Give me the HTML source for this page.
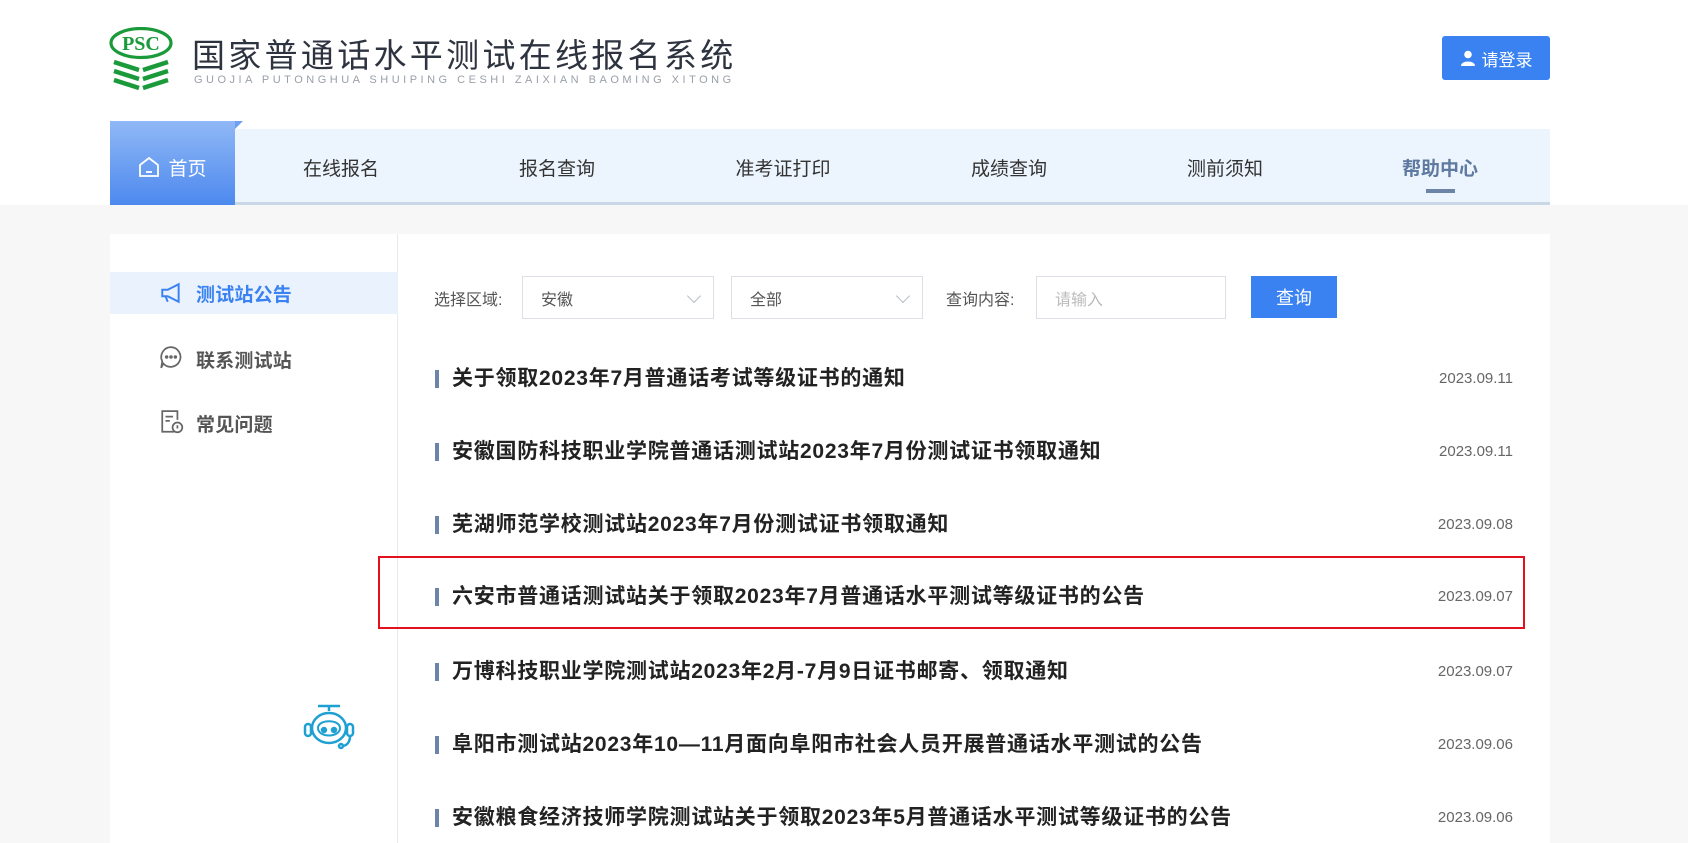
<!DOCTYPE html>
<html><head><meta charset="utf-8"><style>
*{margin:0;padding:0;box-sizing:border-box}
body{width:1688px;height:843px;overflow:hidden;background:#f7f7f7;font-family:"Liberation Sans","Noto Sans CJK SC",sans-serif;position:relative}
.top{position:absolute;left:0;top:0;width:1688px;height:205px;background:#fff}
.abs{position:absolute}
.title{left:192px;top:35px;font-size:33px;line-height:36px;color:#2e3340;letter-spacing:3.3px;white-space:nowrap;font-family:"Noto Sans CJK SC",sans-serif}
.pinyin{left:194px;top:74px;font-size:11px;line-height:12px;color:#9aa0a8;letter-spacing:3.5px;white-space:nowrap}
.login{left:1442px;top:36px;width:108px;height:44px;background:#3a82f1;border-radius:3px;color:#fff;font-size:17px;display:flex;align-items:center;justify-content:center;gap:6px}
.nav{left:235px;top:129px;width:1315px;height:76px;background:#ecf4fd;border-bottom:3px solid #c9d7e7}
.home{left:110px;top:121px;width:125px;height:84px;background:linear-gradient(#90b8f6,#4d89ee);color:#fff;font-size:19px;display:flex;align-items:center;justify-content:center;gap:8px;padding-top:8px}
.fold{left:235px;top:121px;width:0;height:0;border-left:8px solid #6f9ff0;border-bottom:8px solid transparent}
.ni{top:154px;font-size:19px;color:#333;transform:translateX(-50%);white-space:nowrap}
.panel{left:110px;top:234px;width:1440px;height:609px;background:#fff}
.side{left:110px;top:234px;width:288px;height:609px;border-right:1px solid #e6e8eb}
.sa{left:110px;top:272px;width:288px;height:42px;background:#eaf2fd}
.si{left:196px;font-size:19px;font-weight:bold;color:#555;white-space:nowrap;letter-spacing:0.2px}
.lbl{font-size:16px;color:#555;top:286px}
.sel{top:276px;height:43px;border:1px solid #dcdfe6;font-size:16px;color:#555;padding:9px 18px}
.chev{position:absolute;right:14px;top:14px;width:10px;height:10px;border-right:1px solid #b8bcc4;border-bottom:1px solid #b8bcc4;transform:rotate(45deg)}
.btn{left:1251px;top:276px;width:86px;height:42px;background:#3a82f1;color:#fff;font-size:18px;display:flex;align-items:center;justify-content:center}
.it{left:435px;width:1080px;height:30px}
.it .bar{position:absolute;left:0;top:6px;width:4px;height:18px;background:#6c84a8}
.it .t{position:absolute;left:17px;top:0;font-size:21px;letter-spacing:0.75px;font-weight:bold;color:#222;white-space:nowrap;line-height:30px}
.it .d{position:absolute;right:2px;top:0;font-size:15px;color:#666;line-height:30px}
.red{left:378px;top:556px;width:1147px;height:73px;border:2px solid #e5101d}
</style></head><body>
<div class="top"></div>
<svg class="abs" style="left:109px;top:27px" width="64" height="64" viewBox="0 0 64 64">
<ellipse cx="32" cy="16" rx="30" ry="14.5" fill="none" stroke="#1a9a3a" stroke-width="3.2"/>
<text x="32" y="23" text-anchor="middle" font-family="Liberation Serif,serif" font-weight="bold" font-size="20" fill="#1a9a3a">PSC</text>
<g stroke="#1a9a3a" stroke-width="4.5" fill="none">
<path d="M5 35 L30 43 M5 44 L30 52 M5 53 L30 61 M59 35 L34 43 M59 44 L34 52 M59 53 L34 61"/>
</g></svg>
<div class="abs title">国家普通话水平测试在线报名系统</div>
<div class="abs pinyin">GUOJIA PUTONGHUA SHUIPING CESHI ZAIXIAN BAOMING XITONG</div>
<div class="abs login"><svg width="16" height="16" viewBox="0 0 16 16"><circle cx="8" cy="4.5" r="3.8" fill="#fff"/><path d="M1 16 C1 10 15 10 15 16Z" fill="#fff"/></svg>请登录</div>
<div class="abs nav"></div>
<div class="abs home"><svg width="22" height="22" viewBox="0 0 22 22" fill="none" stroke="#fff" stroke-width="1.8"><path d="M2 9 L11 2 L20 9 V20 H2Z"/><path d="M8 16 H14"/></svg>首页</div>
<div class="abs fold"></div>
<div class="abs ni" style="left:341px">在线报名</div>
<div class="abs ni" style="left:557px">报名查询</div>
<div class="abs ni" style="left:783px">准考证打印</div>
<div class="abs ni" style="left:1009px">成绩查询</div>
<div class="abs ni" style="left:1225px">测前须知</div>
<div class="abs ni" style="left:1440px;color:#5f7aa0;font-weight:bold">帮助中心</div>
<div class="abs" style="left:1426px;top:189px;width:29px;height:4px;background:#6c84a8"></div>
<div class="abs panel"></div>
<div class="abs side"></div>
<div class="abs sa"></div>
<svg class="abs" style="left:159px;top:281px" width="24" height="24" viewBox="0 0 22 22" fill="none" stroke="#3a82f1" stroke-width="1.8"><path d="M3 8 H8 L18 3 V19 L8 14 H3Z"/><path d="M6 14 L8 19"/></svg>
<div class="abs si" style="top:280px;color:#3a82f1">测试站公告</div>
<svg class="abs" style="left:159px;top:345px" width="24" height="24" viewBox="0 0 22 22" fill="none" stroke="#666" stroke-width="1.6"><path d="M11 2 A9 9 0 1 1 4 17 L2 21 L3 15 A9 9 0 0 1 11 2Z"/><circle cx="7" cy="11" r="0.8" fill="#666"/><circle cx="11" cy="11" r="0.8" fill="#666"/><circle cx="15" cy="11" r="0.8" fill="#666"/></svg>
<div class="abs si" style="top:346px">联系测试站</div>
<svg class="abs" style="left:160px;top:409px" width="24" height="26" viewBox="0 0 22 24" fill="none" stroke="#666" stroke-width="1.6"><path d="M13 21 H2 V2 H16 V10"/><path d="M5 7 H12 M5 11 H9"/><circle cx="16" cy="17" r="4.5"/><path d="M16 15 V18"/></svg>
<div class="abs si" style="top:410px">常见问题</div>
<svg class="abs" style="left:299px;top:702px" width="58" height="50" viewBox="0 0 58 50" fill="none" stroke="#1ea0d2" stroke-width="2.5">
<path d="M19 4 H41 M30 4 V9"/><ellipse cx="30" cy="26" rx="17" ry="15"/><path d="M19 26 C19 17 41 17 41 26 C41 36 19 36 19 26Z" stroke-width="2"/>
<rect x="6" y="22" width="6" height="12" rx="3"/><rect x="48" y="22" width="6" height="12" rx="3"/><path d="M51 34 C51 42 46 44 43 44"/><circle cx="42" cy="44" r="2"/>
<circle cx="25" cy="28" r="2" fill="#1ea0d2"/><circle cx="35" cy="28" r="2" fill="#1ea0d2"/></svg>
<div class="abs lbl" style="left:434px">选择区域:</div>
<div class="abs sel" style="left:522px;width:192px">安徽<span class="chev"></span></div>
<div class="abs sel" style="left:731px;width:192px">全部<span class="chev"></span></div>
<div class="abs lbl" style="left:946px">查询内容:</div>
<div class="abs sel" style="left:1036px;width:190px;color:#bbb">请输入</div>
<div class="abs btn">查询</div>
<div class="abs it" style="top:364px"><div class="bar"></div><div class="t">关于领取2023年7月普通话考试等级证书的通知</div><div class="d">2023.09.11</div></div>
<div class="abs it" style="top:437px"><div class="bar"></div><div class="t">安徽国防科技职业学院普通话测试站2023年7月份测试证书领取通知</div><div class="d">2023.09.11</div></div>
<div class="abs it" style="top:510px"><div class="bar"></div><div class="t">芜湖师范学校测试站2023年7月份测试证书领取通知</div><div class="d">2023.09.08</div></div>
<div class="abs it" style="top:582px"><div class="bar"></div><div class="t">六安市普通话测试站关于领取2023年7月普通话水平测试等级证书的公告</div><div class="d">2023.09.07</div></div>
<div class="abs it" style="top:657px"><div class="bar"></div><div class="t">万博科技职业学院测试站2023年2月-7月9日证书邮寄、领取通知</div><div class="d">2023.09.07</div></div>
<div class="abs it" style="top:730px"><div class="bar"></div><div class="t">阜阳市测试站2023年10—11月面向阜阳市社会人员开展普通话水平测试的公告</div><div class="d">2023.09.06</div></div>
<div class="abs it" style="top:803px"><div class="bar"></div><div class="t">安徽粮食经济技师学院测试站关于领取2023年5月普通话水平测试等级证书的公告</div><div class="d">2023.09.06</div></div>
<div class="abs red"></div>
</body></html>
